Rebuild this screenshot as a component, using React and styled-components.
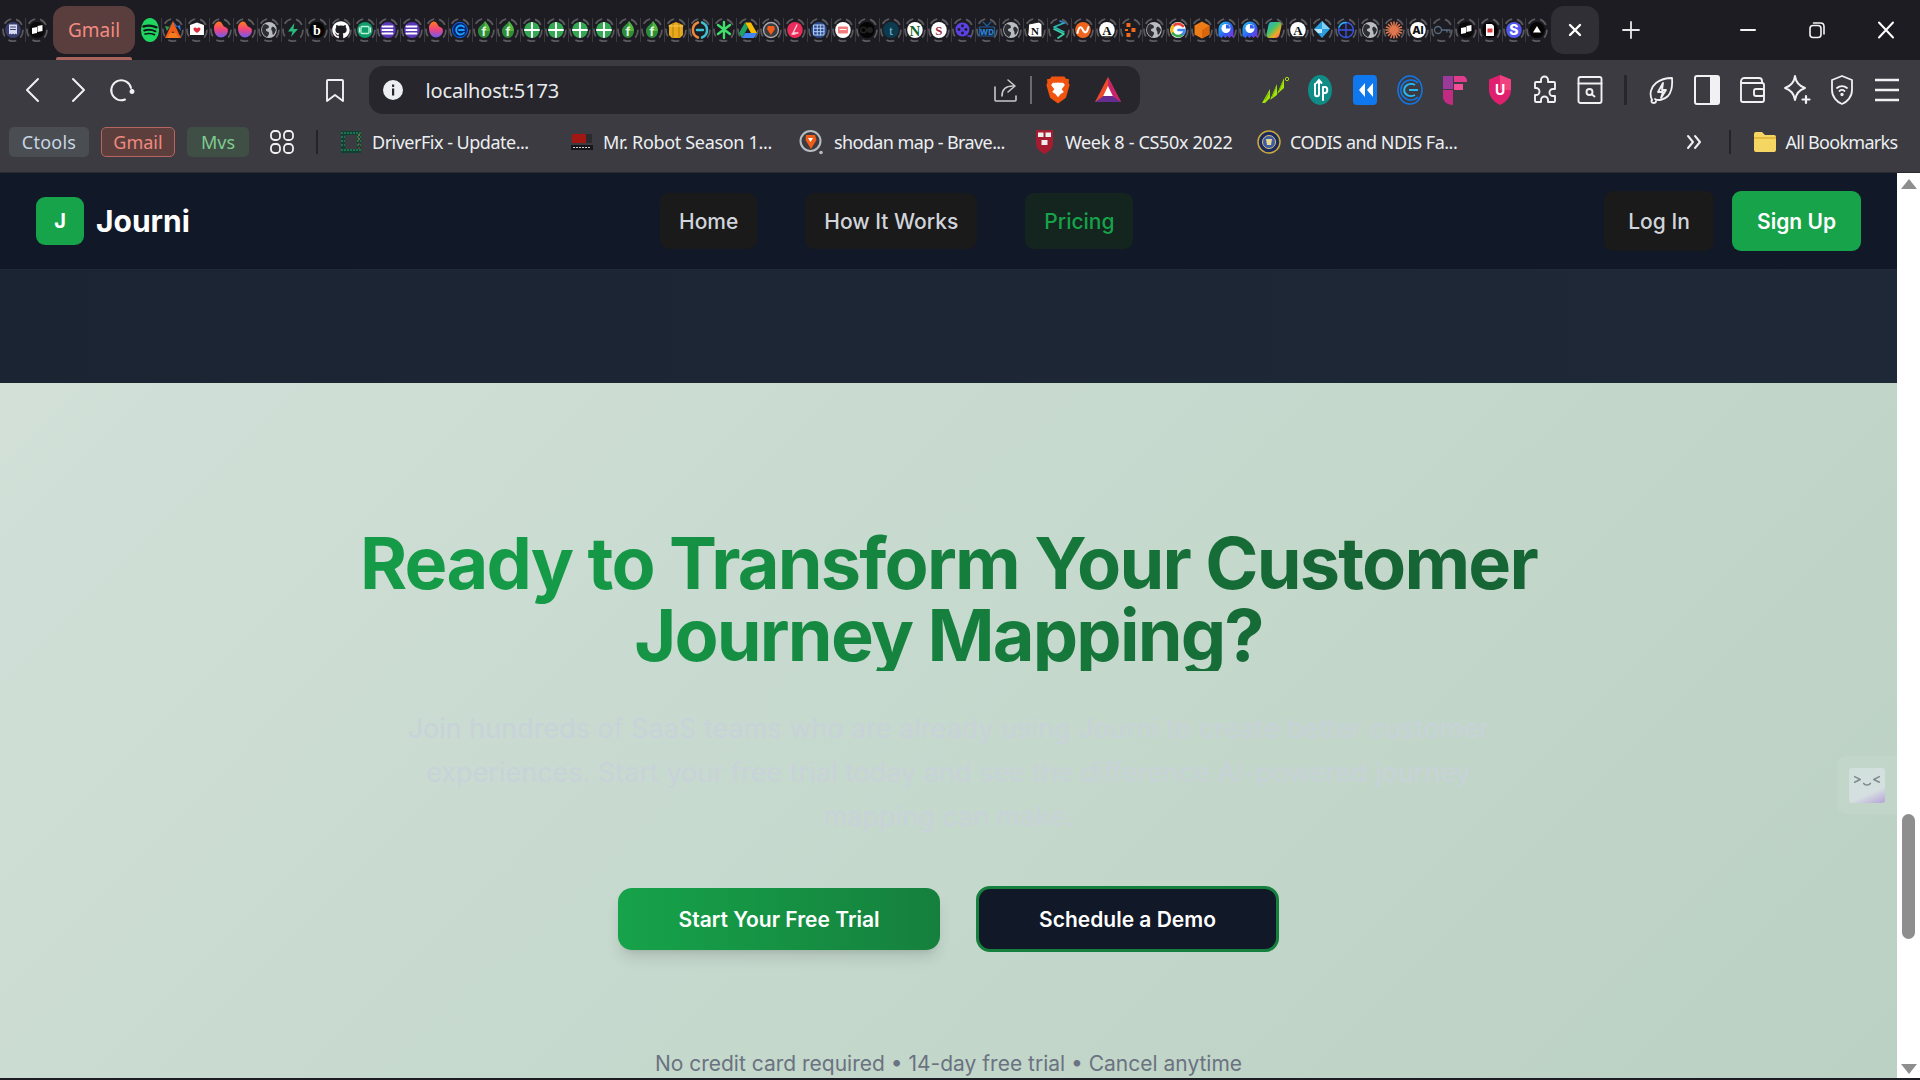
import React from "react";
import styled, { createGlobalStyle } from "styled-components";
import { FaGithub } from "react-icons/fa";

const Global = createGlobalStyle`
  html, body { margin: 0; padding: 0; height: 1080px; overflow: hidden; background: #1c1c22; }
  #root { height: 1080px; }
  * { box-sizing: border-box; }
`;

const Shell = styled.div`
  width: 1920px; height: 1080px; display: flex; flex-direction: column; overflow: hidden;
  font-family: "Noto Sans", "Liberation Sans", sans-serif;
`;

/* ---------- tab strip ---------- */
const TabStrip = styled.div`
  height: 60px; flex: none; background: #1c1c22; display: flex; align-items: flex-start;
  padding: 6px 0 0 1px;
`;
const FavTab = styled.div`
  width: ${p => p.$w || 23.95}px; height: 48px; flex: none; display: flex; align-items: center; justify-content: center;
  background: ${p => (p.$plain ? "none" : "linear-gradient(#3a3a40, #3a3a40) left center / 1px 24px no-repeat")};
`;
const GmailColumn = styled.div`
  width: 82px; margin: 0 3px 0 4px; flex: none; display: flex; flex-direction: column; align-items: center; gap: 3px;
`;
const GmailTab = styled.div`
  width: 82px; height: 48px; border-radius: 13px; background: #5a3d3d; color: #f28b82;
  font-size: 19px; display: flex; align-items: center; justify-content: center;
`;
const GmailLine = styled.div`
  width: 76px; height: 3px; border-radius: 2px 2px 0 0; background: #a9645e;
`;
const CloseTab = styled.div`
  width: 48px; height: 48px; margin-left: 2px; border-radius: 13px; background: #2f2f35; flex: none;
  display: flex; align-items: center; justify-content: center;
`;
const NewTab = styled.div`
  width: 32px; height: 48px; margin-left: 16px; flex: none; display: flex; align-items: center; justify-content: center;
`;
const WindowButtons = styled.div`
  margin-left: auto; display: flex; height: 48px; align-items: center;
`;
const WindowButton = styled.div`
  width: 69px; height: 48px; display: flex; align-items: center; justify-content: center;
`;

/* ---------- toolbar ---------- */
const Toolbar = styled.div`
  height: 60px; flex: none; background: #3b3b41; display: flex; align-items: center; padding-left: 11px;
`;
const NavSlot = styled.div`
  width: ${p => p.$w || 44.5}px; height: 48px; flex: none; display: flex; align-items: center; justify-content: center;
`;
const BookmarkSlot = styled(NavSlot)`
  width: 40px; margin-left: 170px; margin-right: 14.5px;
`;
const UrlBar = styled.div`
  width: 771px; height: 48px; flex: none; border-radius: 14px; background: #26262c; display: flex; align-items: center;
  padding-left: 14px;
`;
const UrlText = styled.div`
  margin-left: 22.5px; color: #e8eaed; font-size: 20px; letter-spacing: -0.15px; flex: 1;
`;
const UrlSep = styled.div`
  width: 1.5px; height: 28px; background: #6a6a70; margin: 0 11.500px 0 12px;
`;
const UrlIcon = styled.div`
  width: ${p => p.$w || 28}px; margin-right: ${p => p.$mr || 0}px; height: 32px; flex: none; display: flex; align-items: center; justify-content: center;
`;
const ExtGroup = styled.div`
  margin-left: 112px; display: flex; align-items: center;
`;
const ExtSlot = styled.div`
  width: 45px; height: 40px; flex: none; display: flex; align-items: center; justify-content: center;
`;
const ExtSep = styled.div`
  width: 2.5px; height: 30px; background: #26262c; margin: 0 13px 0 12px; flex: none; border-radius: 1px;
`;

/* ---------- bookmarks ---------- */
const BookmarksBar = styled.div`
  height: 53px; flex: none; background: #3b3b41; display: flex; align-items: center; padding: 0 0 8px 9px;
  border-bottom: 1px solid #2a2a2f; color: #eceff1; font-size: 18px;
`;
const Chip = styled.div`
  height: 30px; border-radius: 5px; flex: none; display: flex; align-items: center; justify-content: center;
  width: ${p => p.$w}px; margin-right: ${p => p.$mr}px; background: ${p => p.$bg}; color: ${p => p.$fg};
  border: ${p => (p.$border ? `1.5px solid ${p.$border}` : "none")};
  letter-spacing: ${p => p.$ls || 0}px;
`;
const BarSep = styled.div`
  width: 2px; height: 24px; flex: none; background: #232328; margin: ${p => p.$m};
`;
const BookmarkItem = styled.div`
  display: flex; align-items: center; flex: none; gap: ${p => p.$gap || 10}px;
  white-space: nowrap; letter-spacing: ${p => p.$ls ?? -0.33}px; width: ${p => (p.$w ? `${p.$w}px` : "auto")};
  svg { flex: none; }
`;
const Overflow = styled.div`
  width: 20px; flex: none; display: flex; justify-content: center;
`;

/* ---------- page ---------- */
const Viewport = styled.div`
  flex: none; height: 905px; display: flex; position: relative;
`;
const Page = styled.div`
  width: 1897px; flex: none; display: flex; flex-direction: column; font-family: Inter, "Liberation Sans", sans-serif;
`;
const TopNav = styled.nav`
  height: 97px; flex: none; background: #111827; border-bottom: 1px solid #1f2937; display: flex; align-items: center;
  padding: 0 36px;
`;
const Brand = styled.div`
  display: flex; align-items: center; gap: 12px; width: 624px;
`;
const LogoMark = styled.div`
  width: 48px; height: 48px; border-radius: 9px; background: #16a34a; color: #fff; font-weight: 700; font-size: 20px;
  display: flex; align-items: center; justify-content: center;
`;
const BrandName = styled.div`
  color: #fff; font-weight: 700; font-size: 30px;
`;
const NavLinks = styled.div`
  display: flex; gap: 48px;
`;
const NavLink = styled.a`
  height: 56px; padding: 0 19px; border-radius: 9px; display: flex; align-items: center; font-size: 21px; font-weight: 500;
  background: ${p => (p.$active ? "#14241f" : "#1a1a1a")}; color: ${p => (p.$active ? "#16a34a" : "#d1d5db")};
`;
const NavActions = styled.div`
  margin-left: auto; display: flex; gap: 18px;
`;
const LoginButton = styled.a`
  width: 110px; height: 60px; border-radius: 9px; background: #1a1a1a; color: #d1d5db; font-size: 21px; font-weight: 500;
  display: flex; align-items: center; justify-content: center;
`;
const SignupButton = styled.a`
  width: 129px; height: 60px; border-radius: 9px; background: #16a34a; color: #fff; font-size: 21px; font-weight: 600;
  display: flex; align-items: center; justify-content: center;
`;
const DarkBand = styled.div`
  height: 113px; flex: none; background: linear-gradient(90deg, #1a2433, #1e2836);
`;
const Cta = styled.section`
  flex: 1; min-height: 0; overflow: hidden; padding-top: 144px; display: flex; flex-direction: column; align-items: center;
  background: linear-gradient(135deg, #d2e0d8 0%, #c4d8cc 55%, #bbd1c3 100%);
`;
const Heading = styled.h1`
  margin: 0; font-size: 72px; line-height: 72px; font-weight: 700; letter-spacing: -1.8px; text-align: center;
  width: 1280px;
  background: linear-gradient(90deg, #159a47 20%, #166534 80%);
  -webkit-background-clip: text; background-clip: text; color: transparent;
`;
const Lead = styled.p`
  margin: 36px 0 0; width: 1100px; font-size: 27px; line-height: 44px; text-align: center; color: #c8d2d9;
`;
const Actions = styled.div`
  margin-top: 47px; display: flex; align-items: center; gap: 36px;
`;
const PrimaryCta = styled.a`
  width: 322px; height: 62px; border-radius: 14px; color: #fff; font-size: 21px; font-weight: 600;
  background: linear-gradient(90deg, #16a34a, #15803d); display: flex; align-items: center; justify-content: center;
  box-shadow: 0 10px 15px -3px rgba(0,0,0,.12), 0 4px 6px -4px rgba(0,0,0,.12);
`;
const SecondaryCta = styled.a`
  width: 303px; height: 66px; border-radius: 14px; color: #fff; font-size: 21px; font-weight: 600;
  background: #111827; border: 3px solid #15803d; display: flex; align-items: center; justify-content: center;
`;
const Footnote = styled.p`
  margin: 98px 0 0; font-size: 21px; line-height: 28px; color: #6b7280; white-space: nowrap;
`;
const Scrollbar = styled.div`
  width: 23px; flex: none; background: #fff; display: flex; flex-direction: column; align-items: center; height: 905px;
  padding: 6px 0 4px;
`;
const ScrollThumb = styled.div`
  width: 13px; height: 125px; border-radius: 7px; background: #8e8e8e; margin-top: 625px;
`;
const ScrollDown = styled.div`
  margin-top: auto; display: flex;
`;
const ScrollUp = styled.div`
  display: flex;
`;
const BottomEdge = styled.div`
  flex: 1; background: #1c1c22;
`;
const Widget = styled.div`
  position: absolute; right: 23px; top: 583px; width: 60px; height: 58px; border-radius: 10px 0 0 10px;
  background: rgba(255,255,255,.07); display: flex; align-items: center; justify-content: center;
`;
const WidgetTile = styled.div`
  width: 36px; height: 35px; border-radius: 3px; padding-top: 3px;
  background: linear-gradient(155deg, #d0e0dc 0%, #d5dfe0 68%, #b6a3d8 100%);
  display: flex; justify-content: center;
`;

/* ---------- icons ---------- */
const Ic = ({ s = 24, w, h, vb = "0 0 24 24", c = "#f1f1f3", sw = 2, children }) => (
  <svg width={w || s} height={h || s} viewBox={vb} fill="none" stroke={c} strokeWidth={sw} strokeLinecap="round" strokeLinejoin="round">{children}</svg>
);
const T = ({ x = 12, y = 16.5, s = 12, f = "#fff", w = 700, ff = "Inter, sans-serif", children }) => (
  <text x={x} y={y} fontSize={s} fill={f} fontWeight={w} fontFamily={ff} textAnchor="middle" stroke="none">{children}</text>
);
const Oval = ({ f, rx = 7.8, ry = 8 }) => <ellipse cx="12" cy="12" rx={rx} ry={ry} fill={f} />;

const flame = (id) => (
  <g>
    <defs><linearGradient id={id} x1="0" y1="0" x2="0" y2="1"><stop offset="0" stopColor="#ff7a1a" /><stop offset=".5" stopColor="#f0447f" /><stop offset="1" stopColor="#6d5cf0" /></linearGradient></defs>
    <path d="M5 10c0-4 3-6.500 5-6.500 3 0 3.500 3.500 5 5 1.500 1 4 1 4 4 0 4-3.500 7-7 7-4 0-7-4-7-9.500z" fill={`url(#${id})`} />
  </g>
);
const globe = (
  <g>
    <Oval f="#b9bcc0" />
    <path d="M8 6c2 1 4 1 4 3s-3 1-3 3 3 1 3 3-1 3-2 4c-3-1-5-4-5-7s1-5 3-6zM15 9c2-1 3 1 4 3-1 2-1 4-3 5-1-2 0-3-1-4s-1-3 0-4z" fill="#2d2e33" />
  </g>
);
const leaf = (
  <g>
    <path d="M13 3c2 3 5 5 5 10 0 4-3 7-6 7s-6-3-6-7c0-5 5-6 7-10z" fill="#2f8d3a" />
    <path d="M13 3c2 3 5 5 5 10H12z" fill="#5bbf45" opacity=".8" />
    <T y={18} s={12} f="#e8f5e0">f</T>
  </g>
);
const plus = (
  <g>
    <Oval f="#34a853" />
    <path d="M12 5v14M5 12h14" stroke="#fff" strokeWidth="2" />
  </g>
);
const listIc = (
  <g>
    <Oval f="#5b36b8" />
    <path d="M8.500 8.500h8M8.500 12h8M8.500 15.500h8M6.500 8.500h.5M6.500 12h.5M6.500 15.500h.5" stroke="#fff" strokeWidth="2" />
  </g>
);
const pages = (
  <g>
    <Oval f="#0a0a0a" />
    <path d="M7 10l5-1v6l-5 1zM12.500 8l5-1v6l-5 1z" fill="#fff" stroke="none" />
  </g>
);
const ghost = (id) => (
  <g>
    <defs><linearGradient id={id} x1="0" y1="0" x2="1" y2="1"><stop offset="0" stopColor="#1ec8f0" /><stop offset=".6" stopColor="#2f5df0" /><stop offset="1" stopColor="#8a2fe0" /></linearGradient></defs>
    <path d="M4.500 11a7.500 7.500 0 0115 0v9l-2-2-2 2-2-2-2 2-2-2-2 2-3-2z" fill={`url(#${id})`} />
    <circle cx="12" cy="10.500" r="4.500" fill="#fff" />
    <path d="M12 10.500V6.500a4 4 0 014 4z" fill="#2f5df0" />
  </g>
);
const whiteA = (
  <g>
    <Oval f="#fff" />
    <T y={17} s={13} f="#111" w={800} ff="'Liberation Serif', serif">A</T>
    <path d="M8 19h8" stroke="#111" strokeWidth="1.500" />
  </g>
);

const favs = [
  <g><Oval f="#3a3d70" /><path d="M8 6.500h8v10l-1.300-1-1.300 1-1.400-1-1.400 1-1.300-1-1.300 1z" fill="#d7dbef" stroke="none" /><path d="M9.500 9h5M9.500 11.500h5" stroke="#3a3d70" strokeWidth="1" /></g>,
  pages,
];
const favs2 = [
  <g><path d="M12 3l8 17h-5l-3-7-3 7H4z" fill="#f25c19" /><path d="M12 3l3 6 4-2 1 6z" fill="#2a7de1" /><path d="M12 3L9 9 4 8l2 5z" fill="#2f9e57" /><path d="M9 15h6l3 5H6z" fill="#f47b20" /></g>,
  <g><path d="M5 7l7-2.500L19 7v10H5z" fill="#fff" /><path d="M12 15c-2-1.500-3.500-2.500-3.500-4 0-1.500 2.500-2 3.500-.5 1-1.500 3.500-1 3.500.5 0 1.500-1.500 2.500-3.500 4z" fill="#e02b3c" /></g>,
  flame("fl1"), flame("fl2"), globe,
  <path d="M13.500 5L7 13.500h4.500L10 19l7-8h-4.500z" fill="#27b97e" stroke="none" />,
  <g><Oval f="#050505" /><T y={17} s={14} w={800} ff="'Liberation Serif', serif">b</T></g>,
  <FaGithub x="3" y="3" size={18} color="#fff" />,
  <g><Oval f="#0f9d6b" /><rect x="8" y="8.500" width="8" height="7" rx="1" stroke="#bff0d8" strokeWidth="1.300" /><path d="M6.500 10v4M17.500 10v4" stroke="#bff0d8" strokeWidth="1.300" /></g>,
  listIc, listIc, flame("fl3"),
  <g><Oval f="#06246a" /><ellipse cx="12" cy="12" rx="7.500" ry="7.700" stroke="#1267e8" strokeWidth="1" /><path d="M16 9a4.500 4.500 0 100 6M11 12h5" stroke="#1aa0ff" strokeWidth="1.800" /></g>,
  leaf, leaf, plus, plus, plus, plus, leaf, leaf,
  <g><path d="M5 7l7-3 7 3v10l-3 3H8l-3-3z" fill="#e8a91c" /><path d="M9 5.500v14M15 5.500v14" stroke="#b77d0e" strokeWidth="1" /><path d="M5 8h14" stroke="#f6cf5a" strokeWidth="1" /></g>,
  <g><path d="M10 4.500a7.800 8 0 000 15" stroke="#f0883a" strokeWidth="2.500" /><path d="M14 4.500a7.800 8 0 010 15" stroke="#3fc0d0" strokeWidth="2.500" /><path d="M9 12h6" stroke="#3fc0d0" strokeWidth="2.500" /></g>,
  <g stroke="#3fe06a" strokeWidth="2.400"><path d="M12 4v16M6 7l12 9M18 7L6 16" /></g>,
  <g stroke="none"><path d="M9 4.500h6L21 15h-6z" fill="#fbbc04" /><path d="M9 4.500L3 15l3 5 6-10.500z" fill="#1fa463" /><path d="M6 20l3-5h12l-3 5z" fill="#4285f4" /></g>,
  <g><circle cx="12" cy="12" r="7.500" fill="#3b3b40" stroke="#a8a8ac" strokeWidth="1.400" /><path d="M9 8h6l1 3-4 6-4-6z" fill="#f25c19" stroke="none" /></g>,
  <g><Oval f="#ea2c5a" /><path d="M14 7l-4 8h5M12 16l-3 0" stroke="#fbd5de" strokeWidth="1.300" /></g>,
  <g><Oval f="#2c4a8c" /><path d="M7 7h10v10H7zM10.300 7v10M13.700 7v10M7 10.300h10M7 13.700h10" stroke="#b6cff5" strokeWidth="1" /></g>,
  <g><Oval f="#fff" /><rect x="7" y="8.500" width="10" height="7" rx="1" fill="#f27b7b" /><path d="M9 11.500h6" stroke="#fff" strokeWidth="1" /></g>,
  <g><Oval f="#050505" /><circle cx="8.500" cy="12" r="2.800" stroke="#222" strokeWidth="1.600" /><circle cx="15" cy="12" r="3" fill="#222" stroke="none" /></g>,
  <g><Oval f="#0c3a4e" /><T y={17} s={13} f="#7fc0d8" w={500} ff="'Liberation Serif', serif">t</T></g>,
  <g><Oval f="#fff" /><T y={18} s={15} f="#14632a" w={800} ff="'Liberation Serif', serif">N</T></g>,
  <g><Oval f="#fff" /><T y={17} s={13} f="#a32a3a" w={800} ff="'Liberation Serif', serif">S</T></g>,
  <g><circle cx="11.500" cy="11.500" r="7" fill="#5b42e8" /><circle cx="11.500" cy="8" r="1.500" fill="#1c1c22" /><circle cx="11.500" cy="15" r="1.500" fill="#1c1c22" /><circle cx="8" cy="11.500" r="1.500" fill="#1c1c22" /><circle cx="15" cy="11.500" r="1.500" fill="#1c1c22" /><path d="M17 18h3" stroke="#5b42e8" strokeWidth="1.500" /></g>,
  <g><path d="M8 4l4 4 4-4" stroke="#1d5f9e" strokeWidth="1.200" /><path d="M4.500 9h15v9h-15z" stroke="#1d5f9e" strokeWidth="1.200" /><T y={17} s={8} f="#2a83d4" w={800}>WD</T></g>,
  globe,
  <g><path d="M6 6l10-2 3 2v13H7l-2-2z" fill="#fff" stroke="#222" strokeWidth="1" /><T y={17} s={11} f="#111" w={800} ff="'Liberation Serif', serif">N</T></g>,
  <g stroke="#2fb9b0" strokeWidth="1.600"><path d="M17 5L7 9l10 5" /><path d="M7 11l10 5-6 4" stroke="#38d6a8" /><path d="M13 3l5 2" stroke="#2f8bd0" /></g>,
  <g><Oval f="#f0641e" /><path d="M6.500 15c1.500-7 3.500-7 5.500-3s4 3 5.500-3" stroke="#fff" strokeWidth="2" /></g>,
  whiteA,
  <g stroke="none" fill="#f26a1b"><rect x="7.500" y="5" width="4" height="4" /><rect x="12.500" y="10" width="4" height="4" /><rect x="7.500" y="15" width="4" height="4" /><rect x="6" y="11" width="3" height="2" /></g>,
  globe,
  <g stroke="none"><Oval f="#fff" /><g fill="none" strokeWidth="2.600"><path d="M17 8a6.500 6.500 0 00-10 .5" stroke="#ea4335" /><path d="M7 8.500a6.500 6.500 0 000 7" stroke="#fbbc05" /><path d="M7 15.500a6.500 6.500 0 0010 .5" stroke="#34a853" /><path d="M17 16a6 6 0 001.500-4H12.500" stroke="#4285f4" /></g></g>,
  <g stroke="none"><path d="M12 3.500l7.500 4v9L12 20.500l-7.500-4v-9z" fill="#ef7d17" /><path d="M12 12l7.500-4.500v9L12 20.500z" fill="#d9660c" /></g>,
  ghost("gh1"), ghost("gh2"),
  <g stroke="none"><defs><linearGradient id="cp" x1="0" y1="0" x2="1" y2="1"><stop offset="0" stopColor="#2aa5f0" /><stop offset=".4" stopColor="#3ec46d" /><stop offset=".7" stopColor="#f4a81c" /><stop offset="1" stopColor="#e83ea8" /></linearGradient></defs><path d="M9 4h8c2 0 3 2 2.500 4l-2 9c-.5 2-2 3-4 3H7c-2 0-3-2-2.500-4l2-9C7 5 8 4 9 4z" fill="url(#cp)" /></g>,
  whiteA,
  <g stroke="none"><path d="M12 3l8 8-8 9-8-9z" fill="#2a9fe0" /><path d="M12 3l8 8h-8z" fill="#7fd0f5" /><path d="M4 11h8v4H8z" fill="#bfe8fa" /></g>,
  <g><circle cx="12" cy="12" r="7.500" stroke="#3a55e0" strokeWidth="1.400" /><path d="M12 4.500v15M4.500 12h15" stroke="#3a55e0" strokeWidth="1.400" /><path d="M5 9a7.500 7.500 0 017-4.500" stroke="#2ab0e8" strokeWidth="1.400" /></g>,
  globe,
  <g stroke="#e0764e" strokeWidth="1.600"><path d="M12 4v16M4 12h16M6.500 6.500l11 11M17.500 6.500l-11 11M9 4.500l6 15M15 4.500l-6 15M4.500 9l15 6M19.500 9l-15 6" /></g>,
  <g><Oval f="#fff" /><T y={16.500} s={11} f="#111" w={800}>AI</T></g>,
  <g stroke="#596b80" strokeWidth="1.300"><circle cx="8" cy="12" r="3.500" /><path d="M11.500 12H20v2.500M17 12v2" /></g>,
  pages,
  <g><Oval f="#050505" /><path d="M8 6h6l2 2v10H8z" fill="#fff" stroke="none" /><rect x="9.500" y="10.500" width="5" height="4" fill="#e03a3a" stroke="none" /></g>,
  <g><Oval f="#5457f0" /><T y={17} s={14} w={800}>S</T></g>,
  <g><Oval f="#050505" /><path d="M12 8l4 6.500H8z" fill="#fff" stroke="none" /></g>,
];

const Fav = ({ children }) => (
  <svg width="24" height="24" viewBox="0 0 24 24" fill="none" strokeLinecap="round" strokeLinejoin="round">
    <ellipse cx="12" cy="12" rx="10" ry="11.200" stroke="#5c5c60" strokeWidth="1.700" strokeDasharray="8.200 5" strokeLinecap="butt" />
    {children}
  </svg>
);

const Spotify = () => (
  <svg width="18" height="24" viewBox="0 0 18 24" fill="none" stroke="#14191a" strokeLinecap="round">
    <ellipse cx="9" cy="12" rx="9" ry="12" fill="#1ed760" stroke="none" />
    <path d="M2.500 8.500c4-1.300 9-1 13 .8" strokeWidth="2.400" />
    <path d="M3.200 12.500c3.500-1 8-.8 11.300 .8" strokeWidth="2" />
    <path d="M4 16c3-.8 6.500-.6 9.500 .6" strokeWidth="1.700" />
  </svg>
);

const Brave = ({ s = 26 }) => (
  <svg width={s} height={s * 1.14} viewBox="0 0 24 28">
    <path d="M6 1.500h12l1.500 2 3 .5-.5 3 1 2.500-3.500 12L12 27l-7.500-5.500L1 9.500l1-2.500L1.500 4l3-.5z" fill="#f1540e" />
    <path d="M12 7c2 .8 3.500 0 5 .5l1.500 2-3 4 2 2.500-3 2-2.500 3-2.500-3-3-2 2-2.500-3-4 1.500-2c1.500-.5 3 .3 5-.5z" fill="#fff" />
  </svg>
);

const Bat = () => (
  <svg width="28" height="28" viewBox="0 0 28 28">
    <path d="M14 1l13 25H1z" fill="#ef4b2a" />
    <path d="M14 1l7 13.500L27 26h-6l-7-13z" fill="#c9236a" />
    <path d="M1 26l8.500-6h9l8.500 6z" fill="#662d91" />
    <path d="M14 10l4.800 10H9.200z" fill="#fff" />
  </svg>
);

const favicon = (kind) => {
  if (kind === "driver") return (
    <svg width="22" height="24" viewBox="0 0 22 24">
      <rect x="1" y="1" width="20" height="22" fill="#123f33" />
      <rect x="5" y="5" width="12" height="14" fill="#3b3b41" />
      <path d="M1 3h20M1 7h4M17 7h4M1 11h4M17 11h4M1 15h4M17 15h4M1 20h20" stroke="#2ea76b" strokeWidth="1" strokeDasharray="2 1" />
      <path d="M19 4v6" stroke="#c4a23a" strokeDasharray="2 2" /><path d="M19 13v7" stroke="#b5453a" strokeDasharray="2 2" />
    </svg>
  );
  if (kind === "robot") return (
    <svg width="24" height="20" viewBox="0 0 24 20">
      <rect x="2" y="2" width="14" height="9" fill="#a21712" />
      <rect x="16" y="2" width="6" height="9" fill="#2b2b2f" />
      <rect x="1" y="13" width="22" height="5" fill="#16161a" />
      <path d="M3 15.500h18" stroke="#cfcfcf" strokeWidth="1" strokeDasharray="2 1" />
    </svg>
  );
  if (kind === "shodan") return (
    <svg width="24" height="26" viewBox="0 0 24 26">
      <circle cx="11.500" cy="12" r="10" fill="#3b3b41" stroke="#b9bcc0" strokeWidth="2" />
      <path d="M7 6h9l1.500 5-5.500 9-5.500-9z" fill="#f25c19" /><path d="M9 9h5l-2.500 4z" fill="#fff" />
      <circle cx="22" cy="23.500" r="1.800" fill="#b9bcc0" />
    </svg>
  );
  if (kind === "harvard") return (
    <svg width="19" height="26" viewBox="0 0 19 26">
      <path d="M1 1h17v14c0 5-5 8-8.500 10C6 23 1 20 1 15z" fill="#a51c30" />
      <rect x="3" y="3.500" width="5.500" height="4.500" fill="#eee" /><rect x="10.500" y="3.500" width="5.500" height="4.500" fill="#eee" /><rect x="6.500" y="11" width="6" height="5" fill="#eee" />
    </svg>
  );
  return (
    <svg width="24" height="24" viewBox="0 0 24 24">
      <circle cx="12" cy="12" r="11" fill="#1d2a5e" stroke="#c9a83f" strokeWidth="1.500" />
      <circle cx="12" cy="12" r="6.500" fill="#3e5aa8" stroke="#d9c46a" strokeWidth="1" />
      <path d="M9 9h6l-1 6h-4z" fill="#e6d98a" />
    </svg>
  );
};

export default function App() {
  return (
    <Shell>
      <Global />
      <TabStrip>
        {favs.map((f, i) => <FavTab key={i} $plain={i === 0} $w={24}><Fav>{f}</Fav></FavTab>)}
        <GmailColumn>
          <GmailTab>Gmail</GmailTab>
          <GmailLine />
        </GmailColumn>
        <FavTab $plain $w={23}><Spotify /></FavTab>
        {favs2.map((f, i) => <FavTab key={i}><Fav>{f}</Fav></FavTab>)}
        <CloseTab>
          <Ic s={20} vb="0 0 20 20" c="#fff" sw={2.4}><path d="M5 5l10 10M15 5L5 15" /></Ic>
        </CloseTab>
        <NewTab>
          <Ic s={20} vb="0 0 20 20" c="#e8e8ea" sw={1.8}><path d="M10 2v16M2 10h16" /></Ic>
        </NewTab>
        <WindowButtons>
          <WindowButton><Ic s={18} vb="0 0 18 18" c="#f4f4f4" sw={2}><path d="M2 9h14" /></Ic></WindowButton>
          <WindowButton><Ic s={18} vb="0 0 18 18" c="#f4f4f4" sw={1.6}><rect x="2" y="4.500" width="11" height="12" rx="3" /><path d="M5.500 2h7c2 0 3.500 1.500 3.500 3.500V13" /></Ic></WindowButton>
          <WindowButton><Ic s={20} vb="0 0 20 20" c="#fff" sw={2}><path d="M3 2.500l14 15M17 2.500L3 17.500" /></Ic></WindowButton>
        </WindowButtons>
      </TabStrip>

      <Toolbar>
        <NavSlot><Ic s={28} vb="0 0 28 28" sw={2}><path d="M19 3L8 14l11 11" /></Ic></NavSlot>
        <NavSlot><Ic s={28} vb="0 0 28 28" sw={2}><path d="M9 3l11 11L9 25" /></Ic></NavSlot>
        <NavSlot><Ic s={26} vb="0 0 26 26" sw={2}><path d="M22 11A10 10 0 1016 22.500" /><path d="M23 13a1.500 1.500 0 10.010 0" fill="#f1f1f3" /></Ic></NavSlot>
        <BookmarkSlot><Ic s={26} vb="0 0 26 26" sw={1.9}><path d="M6 3h14a1 1 0 011 1v20l-8-6-8 6V4a1 1 0 011-1z" /></Ic></BookmarkSlot>
        <UrlBar>
          <svg width="20" height="20" viewBox="0 0 20 20"><circle cx="10" cy="10" r="10" fill="#eceff1" /><rect x="9" y="8.500" width="2.200" height="7" fill="#26262c" /><rect x="9" y="4.500" width="2.200" height="2.400" fill="#26262c" /></svg>
          <UrlText>localhost:5173</UrlText>
          <Ic s={26} vb="0 0 26 26" c="#c9c9cc" sw={1.6}><path d="M3 10v13a1 1 0 001 1h19a1 1 0 001-1v-4" /><path d="M10 19c0-7 4-10 11-10M16 3l7 6-7 6" /></Ic>
          <UrlSep />
          <UrlIcon $w={30} $mr={20}><Brave /></UrlIcon>
          <UrlIcon $w={30} $mr={17}><Bat /></UrlIcon>
        </UrlBar>
        <ExtGroup>
          <ExtSlot>
            <svg width="28" height="28" viewBox="0 0 28 28">
              <path d="M1 27L9 13v9l-5 5zM9 24l7-16v11zM16 18l7-16v10z" fill="#a4e40a" /><path d="M4 24l4-7M11 21l4-10M18 15l4-10" stroke="#6fae02" strokeWidth="1" /><circle cx="26" cy="3" r="1.700" fill="none" stroke="#a4e40a" />
            </svg>
          </ExtSlot>
          <ExtSlot>
            <svg width="24" height="30" viewBox="0 0 24 30">
              <ellipse cx="12" cy="15" rx="12" ry="15" fill="#0f8c85" />
              <path d="M7 9v10c0 3 4 3 4 0V6M8.500 8L11 5l2.500 3M15 12v13M15 12h2c3 0 3 6 0 6h-2" stroke="#fff" strokeWidth="2" fill="none" strokeLinecap="round" />
            </svg>
          </ExtSlot>
          <ExtSlot>
            <svg width="24" height="30" viewBox="0 0 24 30">
              <rect width="24" height="30" rx="4" fill="#0f78ef" /><path d="M12 8v14l-6-7zM20 8v14l-6-7z" fill="#fff" />
            </svg>
          </ExtSlot>
          <ExtSlot>
            <svg width="26" height="30" viewBox="0 0 26 30" fill="none">
              <ellipse cx="13" cy="15" rx="12" ry="14" stroke="#1277e8" strokeWidth="1.500" />
              <path d="M21 8a10 10 0 100 14" stroke="#1277e8" strokeWidth="1.500" />
              <path d="M18 10a7 6 0 100 10M12 15h9" stroke="#28b9f5" strokeWidth="2" />
            </svg>
          </ExtSlot>
          <ExtSlot>
            <svg width="24" height="30" viewBox="0 0 24 30">
              <path d="M0 1h10v13H0z" fill="#9c3a9c" /><path d="M11 1h8c3 0 5 2 5 5v1H11z" fill="#e03c8c" /><path d="M11 9h9v6h-9z" fill="#f24f9b" /><path d="M0 15h10v15c-5 0-10-3-10-8z" fill="#c22b82" />
            </svg>
          </ExtSlot>
          <ExtSlot>
            <svg width="24" height="30" viewBox="0 0 24 30">
              <path d="M12 0l11 4.500V15c0 7-5 12-11 15C6 27 1 22 1 15V4.500z" fill="#e0206f" /><path d="M12 0l11 4.500V15H12z" fill="#f0427f" />
              <T y={20} s={14} ff="Inter, sans-serif">U</T>
            </svg>
          </ExtSlot>
          <ExtSlot>
            <Ic w={28} h={30} vb="0 0 28 30" sw={1.9}><path d="M10 7V5a3.500 3.500 0 017 0v2h6a1 1 0 011 1v6h-2a3.500 3.500 0 000 7h2v5a1 1 0 01-1 1h-6v-2a3.500 3.500 0 00-7 0v2H5a1 1 0 01-1-1v-6h1a3.500 3.500 0 000-7H4V8a1 1 0 011-1z" /></Ic>
          </ExtSlot>
          <ExtSlot>
            <Ic w={26} h={30} vb="0 0 26 30" sw={1.9}><rect x="1.500" y="2" width="23" height="26" rx="2" /><path d="M1.500 8.500h23" /><circle cx="12.500" cy="17" r="3" /><path d="M15 19.500l2.500 2" /></Ic>
          </ExtSlot>
          <ExtSep />
          <ExtSlot>
            <Ic w={26} h={30} vb="0 0 26 30" sw={1.8}><path d="M3 25c-3-6-1-13 4-17 5-4 12-5 16-5 .5 6-.5 14-4 18-4 4-10 5-13 3" /><path d="M14 8l-5 9h5l-2 6 5-8h-4z" /><path d="M3 25c-1 1-1 3 2 3 2 0 2-1 2-2" /></Ic>
          </ExtSlot>
          <ExtSlot>
            <svg width="26" height="30" viewBox="0 0 26 30"><rect x="1" y="1" width="24" height="28" rx="2" fill="none" stroke="#f1f1f3" strokeWidth="2" /><path d="M16 1h7a2 2 0 012 2v24a2 2 0 01-2 2h-7z" fill="#f1f1f3" /></svg>
          </ExtSlot>
          <ExtSlot>
            <Ic w={26} h={30} vb="0 0 26 30" sw={1.9}><path d="M2 7c0-2 1-4 3-4h15c2 0 3 1 3 3v2" /><path d="M2 7v18a2 2 0 002 2h19a2 2 0 002-2V10a2 2 0 00-2-2H4a2 2 0 01-2-1z" /><rect x="15" y="14" width="10" height="7" rx="2" /></Ic>
          </ExtSlot>
          <ExtSlot>
            <Ic w={28} h={30} vb="0 0 28 30" sw={1.9}><path d="M12 1c1 7 4 10 10 12-6 2-9 5-10 12C11 18 8 15 2 13 8 11 11 8 12 1z" /><path d="M23 21v7M19.500 24.500h7" strokeWidth="2.200" /></Ic>
          </ExtSlot>
          <ExtSlot>
            <Ic w={24} h={30} vb="0 0 24 30" sw={1.8}><path d="M12 1l10 4v10c0 7-5 12-10 14C7 27 2 22 2 15V5z" /><path d="M7 13a7 6 0 0110 0M9.500 16a3.500 3 0 015 0" /><circle cx="12" cy="19.500" r=".8" fill="#f1f1f3" /></Ic>
          </ExtSlot>
          <ExtSlot>
            <Ic w={26} h={24} vb="0 0 26 24" sw={2.4}><path d="M1 2h24M1 12h24M1 22h24" strokeLinecap="butt" /></Ic>
          </ExtSlot>
        </ExtGroup>
      </Toolbar>

      <BookmarksBar>
        <Chip $w={80} $mr={12} $bg="#4a4d52" $fg="#c9d6e3" $ls={0.25}>Ctools</Chip>
        <Chip $w={74} $mr={12} $bg="#5c3f3d" $fg="#f0897d" $border="#b4665f">Gmail</Chip>
        <Chip $w={62} $mr={20} $bg="#3f4f46" $fg="#7fcb90">Mvs</Chip>
        <Ic s={26} vb="0 0 26 26" sw={1.8}><rect x="2" y="2" width="9" height="9" rx="3.500" /><rect x="15" y="2" width="9" height="9" rx="3.500" /><rect x="2" y="15" width="9" height="9" rx="3.500" /><rect x="15" y="15" width="9" height="9" rx="3.500" /></Ic>
        <BarSep $m="0 22px 0 21px" />
        <BookmarkItem $w={230} $gap={10} $ls={-0.5}>{favicon("driver")}DriverFix - Update...</BookmarkItem>
        <BookmarkItem $w={229} $gap={9}>{favicon("robot")}Mr. Robot Season 1...</BookmarkItem>
        <BookmarkItem $w={235.5} $gap={11} $ls={-0.6}>{favicon("shodan")}shodan map - Brave...</BookmarkItem>
        <BookmarkItem $w={222} $gap={11.5}>{favicon("harvard")}Week 8 - CS50x 2022</BookmarkItem>
        <BookmarkItem $w={427} $gap={9.5} $ls={-0.5}>{favicon("fbi")}CODIS and NDIS Fa...</BookmarkItem>
        <Overflow><Ic w={18} h={16} vb="0 0 18 16" sw={2}><path d="M3 2l5 6-5 6M10 2l5 6-5 6" /></Ic></Overflow>
        <BarSep $m="0 22px 0 25px" />
        <BookmarkItem $gap={9} $ls={-0.72}>
          <svg width="24" height="22" viewBox="0 0 24 22"><path d="M1 3a2 2 0 012-2h6l3 3h9a2 2 0 012 2v13a2 2 0 01-2 2H3a2 2 0 01-2-2z" fill="#f6d663" /><path d="M1 6h22v2H1z" fill="#e4b93f" /></svg>
          All Bookmarks
        </BookmarkItem>
      </BookmarksBar>

      <Viewport>
        <Page>
          <TopNav>
            <Brand>
              <LogoMark>J</LogoMark>
              <BrandName>Journi</BrandName>
            </Brand>
            <NavLinks>
              <NavLink>Home</NavLink>
              <NavLink>How It Works</NavLink>
              <NavLink $active>Pricing</NavLink>
            </NavLinks>
            <NavActions>
              <LoginButton>Log In</LoginButton>
              <SignupButton>Sign Up</SignupButton>
            </NavActions>
          </TopNav>
          <DarkBand />
          <Cta>
            <Heading>Ready to Transform Your Customer Journey Mapping?</Heading>
            <Lead>Join hundreds of SaaS teams who are already using Journi to create better customer experiences. Start your free trial today and see the difference AI-powered journey mapping can make.</Lead>
            <Actions>
              <PrimaryCta>Start Your Free Trial</PrimaryCta>
              <SecondaryCta>Schedule a Demo</SecondaryCta>
            </Actions>
            <Footnote>No credit card required • 14-day free trial • Cancel anytime</Footnote>
          </Cta>
        </Page>
        <Scrollbar>
          <ScrollUp><svg width="16" height="10" viewBox="0 0 16 10"><path d="M8 0l8 10H0z" fill="#8e8e8e" /></svg></ScrollUp>
          <ScrollThumb />
          <ScrollDown><svg width="16" height="10" viewBox="0 0 16 10"><path d="M0 0h16L8 10z" fill="#8e8e8e" /></svg></ScrollDown>
        </Scrollbar>
        <Widget>
          <WidgetTile>
            <svg width="30" height="18" viewBox="0 0 26 16" fill="none" stroke="#7f8c8c" strokeWidth="1.400" strokeLinecap="round" strokeLinejoin="round">
              <path d="M2 5l5 2.500L2 10M24 5l-5 2.500 5 2.500M10 11c1 2 5 2 6 0" />
            </svg>
          </WidgetTile>
        </Widget>
      </Viewport>
      <BottomEdge />
    </Shell>
  );
}
